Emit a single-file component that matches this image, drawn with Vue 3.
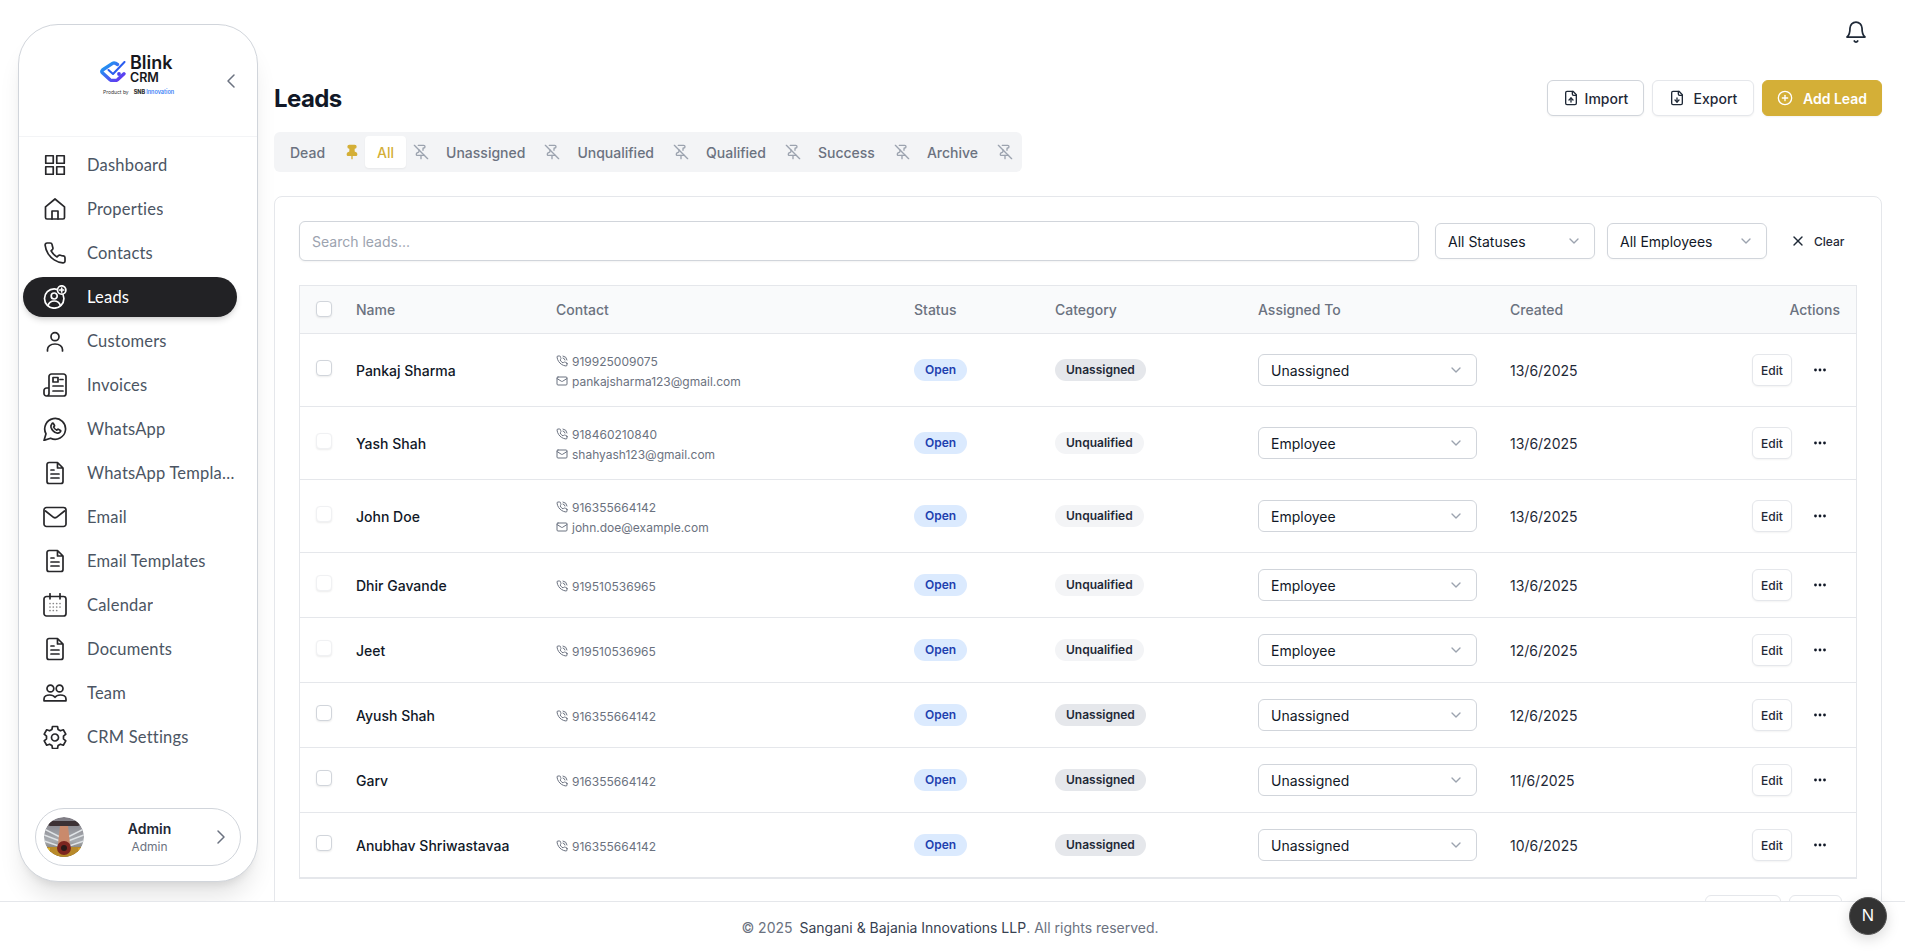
<script setup>
import { h } from 'vue'

const fileBody = 'M14.5 1.5H6a2 2 0 0 0-2 2v17a2 2 0 0 0 2 2h12a2 2 0 0 0 2-2V7zM14.5 1.5V7H20'
const paths = {
  dashboard: ['M2.75 2.75h7.5v7.5h-7.5zM13.75 2.75h7.5v7.5h-7.5zM2.75 13.75h7.5v7.5h-7.5zM13.75 13.75h7.5v7.5h-7.5z'],
  home: ['M12 2 2.5 9.8v10.7A1.5 1.5 0 0 0 4 22h16a1.5 1.5 0 0 0 1.5-1.5V9.8z', 'M9 22v-8h6v8'],
  phone: ['M22 16.92v3a2 2 0 0 1-2.18 2 19.79 19.79 0 0 1-8.63-3.07 19.5 19.5 0 0 1-6-6 19.79 19.79 0 0 1-3.07-8.67A2 2 0 0 1 4.11 2h3a2 2 0 0 1 2 1.72 12.84 12.84 0 0 0 .7 2.81 2 2 0 0 1-.45 2.11L8.09 9.91a16 16 0 0 0 6 6l1.27-1.27a2 2 0 0 1 2.11-.45 12.84 12.84 0 0 0 2.81.7A2 2 0 0 1 22 16.92z'],
  leads: ['M1.5 13.5a9.7 9.7 0 1 0 19.4 0a9.7 9.7 0 1 0-19.4 0', 'M8.2 11a3 3 0 1 0 6 0a3 3 0 1 0-6 0', 'M5 20.5c1-3 3.2-4.5 6.2-4.5s5.2 1.5 6.2 4.5', { d: 'M14.5 5a4.2 4.2 0 1 0 8.4 0a4.2 4.2 0 1 0-8.4 0', fill: '#222225' }, 'M18.7 3v4M16.7 5h4'],
  user: ['M8 7.7a4 4 0 1 0 8 0a4 4 0 1 0-8 0', 'M4.5 22v-1.5c0-3 3-5.5 7.5-5.5s7.5 2.5 7.5 5.5V22'],
  receipt: ['M6 15V3.5A2.5 2.5 0 0 1 8.5 1h12A2.5 2.5 0 0 1 23 3.5v17a2.5 2.5 0 0 1-2.5 2.5H3.5A2.5 2.5 0 0 1 1 20.5v-3A2.5 2.5 0 0 1 3.5 15H6v5.5A2.5 2.5 0 0 1 3.5 23', 'M10 4.5h5v4.5h-5zM17 6.5h3M10 13h10M10 18h10'],
  whatsapp: ['M7.6 21.2A10.400 10.400 0 1 0 3 16.800L1 23.400Z', 'M8.600 7.300c-.7.7-.9 1.700-.6 2.900.8 2.600 3.200 5 5.800 5.800 1.200.3 2.200.1 2.900-.6l.9-1a.6.6 0 0 0-.1-.9l-2.200-1.200a.6.6 0 0 0-.7.1l-.8.8c-1.400-.6-2.600-1.800-3.200-3.200l.8-.8a.6.6 0 0 0 .1-.7l-1.200-2.200a.6.6 0 0 0-.9-.1z'],
  doc: [fileBody, 'M8 9h3M8 13h8M8 17h8'],
  mail: ['M3.5 2.5h17A2.5 2.5 0 0 1 23 5v14a2.500 2.500 0 0 1-2.500 2.500h-17A2.500 2.500 0 0 1 1 19V5a2.500 2.500 0 0 1 2.500-2.500z', 'M2.500 6l8 6.300a2.500 2.500 0 0 0 3 0l8-6.300'],
  calendar: ['M3.500 3.500h17A2.500 2.500 0 0 1 23 6v14.500a2.500 2.500 0 0 1-2.500 2.500h-17A2.500 2.500 0 0 1 1 20.500V6a2.500 2.500 0 0 1 2.500-2.500z', 'M7 .8v5M17 .8v5', { d: 'M7 10.500h.01M10.300 10.500h.01M13.700 10.500h.01M17 10.500h.01M7 14h.01M10.300 14h.01M13.700 14h.01M17 14h.01M7 17.500h.01M10.300 17.500h.01M13.700 17.500h.01', o: 0.55 }],
  team: ['M4 7.500a3.400 3.400 0 1 0 6.800 0a3.400 3.400 0 1 0-6.800 0M13.200 7.500a3.400 3.400 0 1 0 6.800 0a3.400 3.400 0 1 0-6.800 0', 'M1 19.800V18c0-2.500 2.600-4 5.700-4 2.400 0 4.300.9 5.300 2.300 1-1.400 2.900-2.300 5.300-2.300 3.100 0 5.700 1.500 5.700 4v1.800z'],
  gear: ['M9.500 1.500h5l.6 3 2.300 1.300 2.900-1 2.500 4.300-2.300 2v2.800l2.300 2-2.500 4.300-2.900-1-2.300 1.300-.6 3h-5l-.6-3-2.300-1.300-2.900 1L1.200 15.900l2.300-2v-2.800l-2.300-2 2.500-4.300 2.900 1 2.300-1.300z', 'M8.500 12.500a3.500 3.500 0 1 0 7 0a3.500 3.500 0 1 0-7 0'],
  bell: ['M6 8a6 6 0 0 1 12 0c0 7 3 9 3 9H3s3-2 3-9', 'M10.300 21a1.940 1.940 0 0 0 3.400 0'],
  fileUp: ['M15 2H6a2 2 0 0 0-2 2v16a2 2 0 0 0 2 2h12a2 2 0 0 0 2-2V7Z', 'M14 2v4a2 2 0 0 0 2 2h4', 'M12 12v6', 'm15 15-3-3-3 3'],
  fileDown: ['M15 2H6a2 2 0 0 0-2 2v16a2 2 0 0 0 2 2h12a2 2 0 0 0 2-2V7Z', 'M14 2v4a2 2 0 0 0 2 2h4', 'M12 18v-6', 'm9 15 3 3 3-3'],
  plus: ['M2 12a10 10 0 1 0 20 0a10 10 0 1 0-20 0', 'M8 12h8', 'M12 8v8'],
  down: ['m6 9 6 6 6-6'],
  left: ['m15 18-6-6 6-6'],
  right: ['m9 18 6-6-6-6'],
  x: ['M18 6 6 18', 'm6 6 12 12'],
  pin: ['M12 17v5', { d: 'M9 10.760a2 2 0 0 1-1.110 1.790l-1.780.9A2 2 0 0 0 5 15.240V16a1 1 0 0 0 1 1h12a1 1 0 0 0 1-1v-.76a2 2 0 0 0-1.110-1.790l-1.780-.9A2 2 0 0 1 15 10.760V7a1 1 0 0 1 1-1 2 2 0 0 0 0-4H8a2 2 0 0 0 0 4 1 1 0 0 1 1 1z', fill: 'currentColor' }],
  pinOff: ['M12 17v5', 'M15 9.340V7a1 1 0 0 1 1-1 2 2 0 0 0 0-4H7.890', 'm2 2 20 20', 'M9 9v1.760a2 2 0 0 1-1.110 1.790l-1.780.9A2 2 0 0 0 5 15.240V16a1 1 0 0 0 1 1h11'],
  phoneCall: ['M22 16.920v3a2 2 0 0 1-2.180 2 19.790 19.790 0 0 1-8.630-3.070 19.500 19.500 0 0 1-6-6 19.790 19.790 0 0 1-3.070-8.670A2 2 0 0 1 4.110 2h3a2 2 0 0 1 2 1.720 12.840 12.840 0 0 0 .7 2.810 2 2 0 0 1-.45 2.110L8.090 9.910a16 16 0 0 0 6 6l1.270-1.270a2 2 0 0 1 2.110-.45 12.840 12.840 0 0 0 2.810.7A2 2 0 0 1 22 16.920z', 'M14.050 2a9 9 0 0 1 8 7.940', 'M14.050 6A5 5 0 0 1 18 10'],
  envelope: ['M4 4h16a2 2 0 0 1 2 2v12a2 2 0 0 1-2 2H4a2 2 0 0 1-2-2V6a2 2 0 0 1 2-2z', 'm22 7-8.970 5.700a1.940 1.940 0 0 1-2.060 0L2 7'],
}

const Icon = (props) =>
  h(
    'svg',
    { viewBox: '0 0 24 24', fill: 'none', stroke: 'currentColor', 'stroke-width': props.w || 2, 'stroke-linecap': 'round', 'stroke-linejoin': 'round' },
    paths[props.name].map((p) =>
      typeof p === 'string'
        ? h('path', { d: p })
        : h('path', { d: p.d, fill: p.fill || 'none', opacity: p.o || 1 })
    )
  )
Icon.props = ['name', 'w']

const nav = [
  { label: 'Dashboard', icon: 'dashboard' },
  { label: 'Properties', icon: 'home' },
  { label: 'Contacts', icon: 'phone' },
  { label: 'Leads', icon: 'leads', active: true },
  { label: 'Customers', icon: 'user' },
  { label: 'Invoices', icon: 'receipt' },
  { label: 'WhatsApp', icon: 'whatsapp' },
  { label: 'WhatsApp Templates', icon: 'doc' },
  { label: 'Email', icon: 'mail' },
  { label: 'Email Templates', icon: 'doc' },
  { label: 'Calendar', icon: 'calendar' },
  { label: 'Documents', icon: 'doc' },
  { label: 'Team', icon: 'team' },
  { label: 'CRM Settings', icon: 'gear' },
]

const tabs = [
  { label: 'Dead', pinned: true },
  { label: 'All', active: true },
  { label: 'Unassigned' },
  { label: 'Unqualified' },
  { label: 'Qualified' },
  { label: 'Success' },
  { label: 'Archive' },
]

const leads = [
  { name: 'Pankaj Sharma', phone: '919925009075', email: 'pankajsharma123@gmail.com', cat: 'Unassigned', to: 'Unassigned', date: '13/6/2025' },
  { name: 'Yash Shah', phone: '918460210840', email: 'shahyash123@gmail.com', cat: 'Unqualified', to: 'Employee', date: '13/6/2025' },
  { name: 'John Doe', phone: '916355664142', email: 'john.doe@example.com', cat: 'Unqualified', to: 'Employee', date: '13/6/2025' },
  { name: 'Dhir Gavande', phone: '919510536965', cat: 'Unqualified', to: 'Employee', date: '13/6/2025' },
  { name: 'Jeet', phone: '919510536965', cat: 'Unqualified', to: 'Employee', date: '12/6/2025' },
  { name: 'Ayush Shah', phone: '916355664142', cat: 'Unassigned', to: 'Unassigned', date: '12/6/2025' },
  { name: 'Garv', phone: '916355664142', cat: 'Unassigned', to: 'Unassigned', date: '11/6/2025' },
  { name: 'Anubhav Shriwastavaa', phone: '916355664142', cat: 'Unassigned', to: 'Unassigned', date: '10/6/2025' },
]
</script>

<template>
  <div class="app">
    <div class="body">
      <aside class="sidebar">
        <div class="brand">
          <div class="logo">
            <div class="logo-top">
              <svg class="logo-mark" viewBox="0 0 26 21" fill="none">
                <defs>
                  <linearGradient id="lg" x1="0" y1="0" x2="1" y2="1">
                    <stop offset="0" stop-color="#14a5f2" />
                    <stop offset="1" stop-color="#6a2cf0" />
                  </linearGradient>
                </defs>
                <path d="M17.500 3.500 15.500 2.300a3 3 0 0 0-3 .1L2.500 9a1.800 1.800 0 0 0-.1 2.800l7.600 7a3 3 0 0 0 2 .7h3.500a3 3 0 0 0 2-.7l6.500-6" stroke="url(#lg)" stroke-width="3.400" stroke-linecap="round" />
                <path d="M8.500 9 13 13 24.500 1" stroke="#2a5cef" stroke-width="2" stroke-linecap="round" stroke-linejoin="round" />
                <circle cx="19" cy="13" r="1.900" fill="#4a43ee" />
              </svg>
              <div class="logo-words">
                <span class="blink">Blink</span>
                <span class="crm">CRM</span>
              </div>
            </div>
            <div class="logo-sub"><span class="by">Product by</span><b>SNB</b><span class="inno">Innovation</span></div>
          </div>
          <Icon name="left" w="1.500" class="collapse" />
        </div>
        <nav class="nav">
          <a v-for="item in nav" :key="item.label" class="nav-item" :class="{ active: item.active }">
            <Icon :name="item.icon" w="1.700" class="nav-icon" />
            <span class="nav-label">{{ item.label }}</span>
          </a>
        </nav>
        <div class="account">
          <svg class="avatar" viewBox="0 0 40 40">
            <defs>
              <clipPath id="av"><circle cx="20" cy="20" r="20" /></clipPath>
              <linearGradient id="avbg" x1="0" y1="0" x2="0" y2="1">
                <stop offset="0" stop-color="#7d7a82" />
                <stop offset=".6" stop-color="#a9adb2" />
                <stop offset="1" stop-color="#5a5248" />
              </linearGradient>
            </defs>
            <g clip-path="url(#av)">
              <rect width="40" height="40" fill="url(#avbg)" />
              <path d="M0 12 16 20M0 18l16 6M0 24l15 5M40 12 24 20M40 18l-16 6M40 24l-15 5" stroke="#dfe3e6" stroke-width="1.500" />
              <rect x="4" y="4" width="32" height="5" rx="2.500" fill="#3c3134" />
              <path d="M16 9h8l2 18H14z" fill="#c98a6c" />
              <path d="M2 30h36v10H2z" fill="#b88a2a" />
              <circle cx="20" cy="31" r="7" fill="#7d2620" />
              <circle cx="20" cy="31" r="3" fill="#2a1a18" />
              <rect x="0" y="31" width="6" height="9" fill="#e0b624" />
              <rect x="34" y="31" width="6" height="9" fill="#d8a020" />
            </g>
          </svg>
          <div class="who">
            <span class="who-name">Admin</span>
            <span class="who-role">Admin</span>
          </div>
          <Icon name="right" w="1.500" class="account-chev" />
        </div>
      </aside>

      <main class="main">
        <div class="topbar"><Icon name="bell" w="1.750" class="bell" /></div>
        <div class="title-row">
          <h1 class="title">Leads</h1>
          <div class="title-actions">
            <button class="btn strong"><Icon name="fileUp" class="btn-icon" />Import</button>
            <button class="btn export"><Icon name="fileDown" class="btn-icon" />Export</button>
            <button class="btn gold"><Icon name="plus" class="btn-icon" />Add Lead</button>
          </div>
        </div>

        <div class="tabs">
          <template v-for="t in tabs" :key="t.label">
            <span class="tab" :class="{ on: t.active }">{{ t.label }}</span>
            <Icon :name="t.pinned ? 'pin' : 'pinOff'" class="tab-pin" :class="{ pinned: t.pinned }" />
          </template>
        </div>

        <section class="card">
          <div class="filters">
            <input class="search" type="text" placeholder="Search leads..." />
            <div class="select filter"><span>All Statuses</span><Icon name="down" class="chev" /></div>
            <div class="select filter"><span>All Employees</span><Icon name="down" class="chev" /></div>
            <button class="clear"><Icon name="x" class="clear-icon" />Clear</button>
          </div>

          <div class="table-wrap">
            <table class="table">
              <colgroup>
                <col class="c1" /><col class="c2" /><col class="c3" /><col class="c4" /><col class="c5" /><col class="c6" /><col />
              </colgroup>
              <thead>
                <tr>
                  <th class="check-cell"><span class="check head"></span></th>
                  <th>Name</th>
                  <th>Contact</th>
                  <th>Status</th>
                  <th>Category</th>
                  <th>Assigned To</th>
                  <th>Created</th>
                  <th class="right">Actions</th>
                </tr>
              </thead>
              <tbody>
                <tr v-for="l in leads" :key="l.name" :class="l.email ? 'tall' : 'short'">
                  <td class="check-cell"><span class="check" :class="{ faint: l.to === 'Employee' }"></span></td>
                  <td class="name">{{ l.name }}</td>
                  <td class="contact">
                    <div class="line"><Icon name="phoneCall" class="mini" />{{ l.phone }}</div>
                    <div v-if="l.email" class="line"><Icon name="envelope" class="mini" />{{ l.email }}</div>
                  </td>
                  <td><span class="pill open">Open</span></td>
                  <td><span class="pill" :class="l.cat === 'Unassigned' ? 'grey' : 'pale'">{{ l.cat }}</span></td>
                  <td><div class="select assign"><span>{{ l.to }}</span><Icon name="down" class="chev" /></div></td>
                  <td class="date">{{ l.date }}</td>
                  <td>
                    <div class="row-actions">
                      <button class="edit">Edit</button>
                      <svg class="dots" viewBox="0 0 16 16" fill="#111827"><circle cx="3.500" cy="8" r="1.400" /><circle cx="8" cy="8" r="1.400" /><circle cx="12.500" cy="8" r="1.400" /></svg>
                    </div>
                  </td>
                </tr>
              </tbody>
            </table>
          </div>

          <div class="pager">
            <button class="page-btn prev">Previous</button>
            <button class="page-btn next">Next</button>
          </div>
        </section>
      </main>
    </div>

    <footer class="footer">© 2025 <span class="firm">Sangani &amp; Bajania Innovations LLP</span>. All rights reserved.</footer>
    <div class="next-badge">N</div>
  </div>
</template>

<style>
html, body { margin: 0; background: #fff; }
</style>

<style scoped>
* { box-sizing: border-box; }
.app { width: 1905px; height: 952px; display: flex; flex-direction: column; overflow: hidden; position: relative; font-family: Inter, "Liberation Sans", sans-serif; color: #111827; background: #fff; }
.body { flex: none; height: 901px; display: flex; overflow: hidden; }

.sidebar { flex: none; width: 240px; height: 858px; margin: 24px 16px 0 18px; border: 1px solid #d1d5db; border-radius: 40px; background: #fff; box-shadow: 0 20px 25px -5px rgba(0,0,0,.1), 0 8px 10px -6px rgba(0,0,0,.1); display: flex; flex-direction: column; position: relative; font-family: Lato, sans-serif; }
.brand { height: 112px; flex: none; border-bottom: 1px solid #f3f4f6; position: relative; padding: 29px 0 0 81px; }
.logo { width: 76px; }
.logo-top { display: flex; align-items: center; gap: 4px; }
.logo-mark { width: 26px; height: 21px; flex: none; margin-top: 4px; }
.logo-words { display: flex; flex-direction: column; font-family: Inter, sans-serif; color: #17171c; line-height: 1; }
.blink { font-size: 18px; font-weight: 600; line-height: 18px; }
.crm { font-size: 12.500px; font-weight: 600; line-height: 12px; }
.logo-sub { display: flex; align-items: center; margin-top: 4px; font-size: 5px; line-height: 8px; font-family: Inter, sans-serif; color: #333; white-space: nowrap; }
.by { margin: 0 5px 0 3px; }
.logo-sub b { font-weight: 800; font-size: 5.500px; margin-right: 1px; }
.inno { color: #3b82f6; font-weight: 600; font-size: 5.500px; }
.collapse { position: absolute; left: 200px; top: 44px; width: 24px; height: 24px; color: #6b7280; }

.nav { display: flex; flex-direction: column; gap: 4px; padding: 8px 0 0 4px; }
.nav-item { width: 214px; height: 40px; flex: none; display: flex; align-items: center; gap: 20px; padding: 0 0 0 20px; border-radius: 20px; color: #4b5563; font-size: 16.500px; letter-spacing: .2px; }
.nav-item.active { background: #222225; color: #fff; box-shadow: 0 4px 6px -1px rgba(0,0,0,.15), 0 2px 4px -2px rgba(0,0,0,.1); }
.nav-icon { width: 24px; height: 24px; flex: none; color: #27272a; }
.active .nav-icon { color: #fff; }
.nav-label { min-width: 0; overflow: hidden; white-space: nowrap; text-overflow: ellipsis; }

.account { position: absolute; left: 16px; bottom: 15px; width: 206px; height: 58px; border: 1px solid #d1d5db; border-radius: 29px; display: flex; align-items: center; padding: 0 7px 0 8px; background: #fff; }
.avatar { width: 40px; height: 40px; flex: none; border-radius: 50%; }
.who { flex: 1; display: flex; flex-direction: column; align-items: center; padding-left: 6px; font-family: Inter, sans-serif; }
.who-name { font-size: 14px; font-weight: 600; line-height: 20px; color: #1f2937; }
.who-role { font-size: 12px; line-height: 16px; color: #6b7280; }
.account-chev { width: 24px; height: 24px; color: #6b7280; flex: none; }

.main { flex: none; width: 1608px; display: flex; flex-direction: column; }
.topbar { height: 64px; flex: none; display: flex; justify-content: flex-end; align-items: flex-start; padding: 20px 14px 0 0; }
.bell { width: 24px; height: 24px; color: #1f2937; }
.title-row { flex: none; height: 36px; margin-top: 16px; display: flex; align-items: center; justify-content: space-between; }
.title { margin: 0; padding-top: 2px; font-size: 24px; line-height: 32px; font-weight: 700; letter-spacing: -.6px; color: #111827; }
.title-actions { display: flex; gap: 8px; }
.btn { height: 36px; display: flex; align-items: center; justify-content: center; gap: 6px; border: 1px solid #e5e7eb; border-radius: 6px; background: #fff; font: 500 14px Inter, sans-serif; color: #1f2937; box-shadow: 0 1px 2px rgba(0,0,0,.05); padding: 0; }
.btn.strong { width: 97px; border-color: #d1d5db; }
.btn.export { width: 102px; gap: 9px; }
.btn.gold { width: 120px; gap: 10px; background: #d4af37; border-color: #d4af37; color: #fff; font-weight: 600; }
.btn-icon { width: 16px; height: 16px; flex: none; }

.tabs { flex: none; align-self: flex-start; height: 40px; margin-top: 16px; background: #f3f4f6; border-radius: 6px; display: flex; align-items: center; padding: 0 4px; }
.tab { height: 32px; display: flex; align-items: center; padding: 0 12px; border-radius: 4px; font-size: 14px; font-weight: 500; color: #6b7280; }
.tab.on { background: #fff; color: #d4af37; box-shadow: 0 1px 2px rgba(0,0,0,.05); }
.tab-pin { width: 16px; height: 16px; margin: 0 5px 0 7px; color: #9ca3af; flex: none; }
.tab-pin.pinned { color: #d4af37; }

.card { flex: none; margin-top: 24px; border: 1px solid #e5e7eb; border-radius: 8px; padding: 24px; background: #fff; }
.filters { display: flex; align-items: center; height: 40px; }
.search { flex: none; width: 1120px; height: 40px; border: 1px solid #d1d5db; border-radius: 6px; padding: 0 12px; font: 14px Inter, sans-serif; outline: none; box-shadow: 0 1px 2px rgba(0,0,0,.05); color: #111827; }
.search::placeholder { color: #9ca3af; }
.select { display: flex; align-items: center; justify-content: space-between; border: 1px solid #d1d5db; border-radius: 6px; padding: 0 12px; font-size: 14px; background: #fff; color: #111827; }
.filter { flex: none; width: 160px; height: 36px; margin-left: 16px; box-shadow: 0 1px 2px rgba(0,0,0,.03); }
.filter + .filter { margin-left: 12px; }
.chev { width: 16px; height: 16px; color: #9ca3af; flex: none; }
.clear { flex: none; height: 36px; margin-left: 15px; padding: 0 0 0 8px; display: flex; align-items: center; gap: 8px; border: 0; background: none; font: 500 12px Inter, sans-serif; color: #1f2937; }
.clear-icon { width: 16px; height: 16px; }

.table-wrap { margin-top: 24px; border: 1px solid #e5e7eb; border-bottom-width: 2px; }
.table { width: 100%; table-layout: fixed; border-collapse: separate; border-spacing: 0; font-size: 14px; }
.c1 { width: 40px; } .c2 { width: 200px; } .c3 { width: 358px; } .c4 { width: 141px; } .c5 { width: 203px; } .c6 { width: 252px; }
th { height: 48px; background: #f9fafb; border-bottom: 1px solid #e5e7eb; padding: 0 16px; font-weight: 500; color: #6b7280; text-align: left; }
th.right { text-align: right; }
td { padding: 0 16px; border-bottom: 1px solid #e5e7eb; vertical-align: middle; }
tr:last-child td { border-bottom: 0; }
.tall td { height: 73px; }
.short td { height: 65px; }
tr:last-child td { height: 64px; }
th.check-cell { padding: 0 0 2px 16px; }
td.check-cell { padding: 0 0 4px 16px; }
.check { display: block; width: 16px; height: 16px; border: 1px solid #d1d5db; border-radius: 4px; background: #fff; box-shadow: 0 1px 2px rgba(0,0,0,.08); }
.check.faint { border-color: #f0f1f3; }
.name { font-weight: 500; color: #111827; }
td.contact { padding-top: 2px; font-size: 12px; color: #6b7280; }
.line { display: flex; align-items: center; gap: 4px; height: 20px; }
.mini { width: 12px; height: 12px; flex: none; color: #6b7280; }
.pill { display: block; width: fit-content; height: 22px; padding: 0 11px; border-radius: 11px; font-size: 12px; font-weight: 600; line-height: 22px; }
.open { background: #dbeafe; color: #1e40af; }
.grey { background: #e5e7eb; color: #1f2937; }
.pale { background: #f3f4f6; color: #1f2937; }
.assign { width: 219px; height: 32px; }
.date { color: #1f2937; }
.row-actions { display: flex; justify-content: flex-end; align-items: center; }
.edit { width: 40px; height: 32px; padding: 0; border: 1px solid #e5e7eb; border-radius: 6px; background: #fff; box-shadow: 0 1px 2px rgba(0,0,0,.05); font: 500 12px Inter, sans-serif; color: #1f2937; }
.dots { width: 16px; height: 16px; margin: 0 12px 0 20px; flex: none; }

.pager { display: flex; justify-content: flex-end; gap: 8px; margin-top: 16px; padding-right: 15px; }
.page-btn { height: 36px; border: 1px solid #e5e7eb; border-radius: 6px; background: #fff; font: 500 14px Inter, sans-serif; color: #374151; }
.prev { width: 76px; } .next { width: 53px; }

.footer { flex: none; height: 51px; padding-right: 5px; border-top: 1px solid #e5e7eb; background: #fff; display: flex; align-items: center; justify-content: center; white-space: pre; font-size: 14px; color: #6b7280; }
.firm { color: #374151; margin-left: 3px; }
.next-badge { position: absolute; left: 1849px; top: 897px; width: 38px; height: 38px; border-radius: 50%; background: #333; border: 1px solid #555; color: #fff; font: 400 17px "Liberation Sans", sans-serif; display: flex; align-items: center; justify-content: center; box-shadow: 0 4px 14px rgba(0,0,0,.15); }
</style>
